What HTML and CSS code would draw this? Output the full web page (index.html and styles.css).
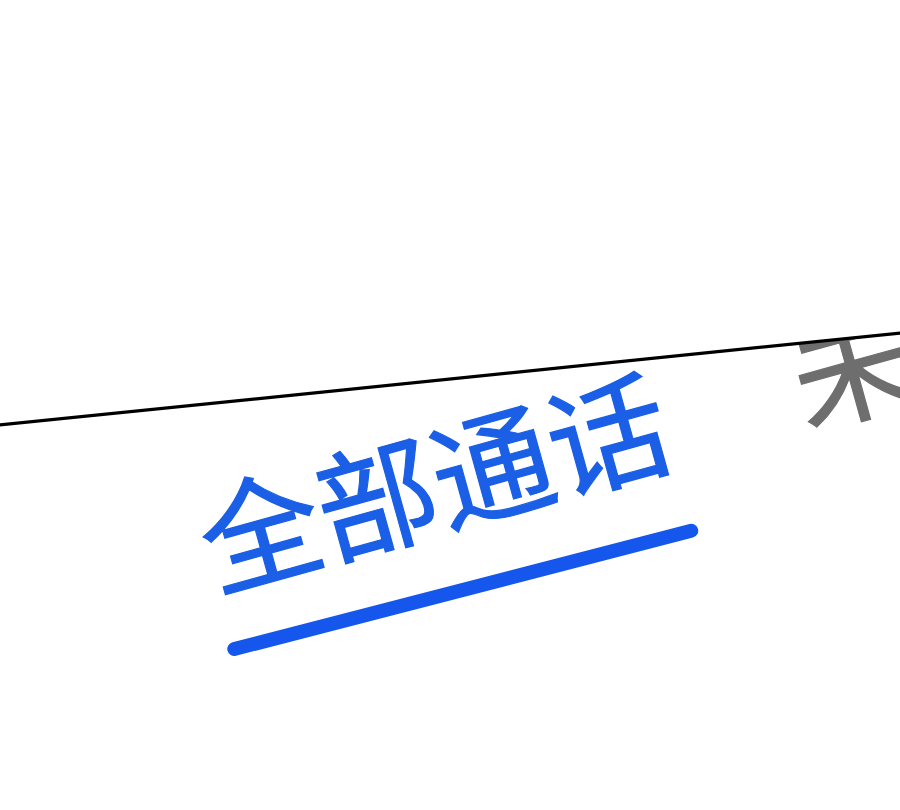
FILE: index.html
```html
<!DOCTYPE html>
<html lang="zh-CN">
<head>
<meta charset="utf-8">
<title>通话记录</title>
<link rel="stylesheet" href="styles.css">
</head>
<body>
<div class="scene">
  <nav class="tabs">
    <div class="tab active">
      <span class="tab-label">全部通话</span>
      <span class="tab-bar"></span>
    </div>
    <div class="tab">
      <span class="tab-label">未接来电</span>
    </div>
  </nav>
  <svg class="edge" width="900" height="810" viewBox="0 0 900 810">
    <polygon points="-10,0 910,0 910,332 -10,426" fill="#ffffff"/>
    <line x1="-10" y1="426" x2="910" y2="332" stroke="#000" stroke-width="3.2"/>
  </svg>
</div>
</body>
</html>
```

FILE: styles.css
```css
html, body {
  margin: 0;
  padding: 0;
  background: #ffffff;
}

.scene {
  position: relative;
  width: 900px;
  height: 810px;
  overflow: hidden;
  background: #ffffff;
}

.tabs {
  display: flex;
  align-items: flex-start;
  gap: 131px;
  margin-top: 465px;
  padding-left: 199px;
  font-family: "Noto Sans CJK SC", "Noto Sans", sans-serif;
  font-size: 120px;
  line-height: 1;
  white-space: nowrap;
  transform: rotate(-15.5deg);
  transform-origin: 259px 60px;
}

.tab {
  display: flex;
  flex-direction: column;
  flex-shrink: 0;
}

.tab-label {
  display: block;
  color: #6e6e6e;
  -webkit-text-stroke: 1.2px currentColor;
}

.tab.active .tab-label {
  color: #1a5fe6;
}

.tab-bar {
  display: block;
  width: 486px;
  height: 14px;
  margin-top: 50px;
  margin-left: -4px;
  border-radius: 7px;
  background: #1557ec;
  transform: rotate(1deg);
}

.edge {
  position: absolute;
  left: 0;
  top: 0;
  pointer-events: none;
}
```
